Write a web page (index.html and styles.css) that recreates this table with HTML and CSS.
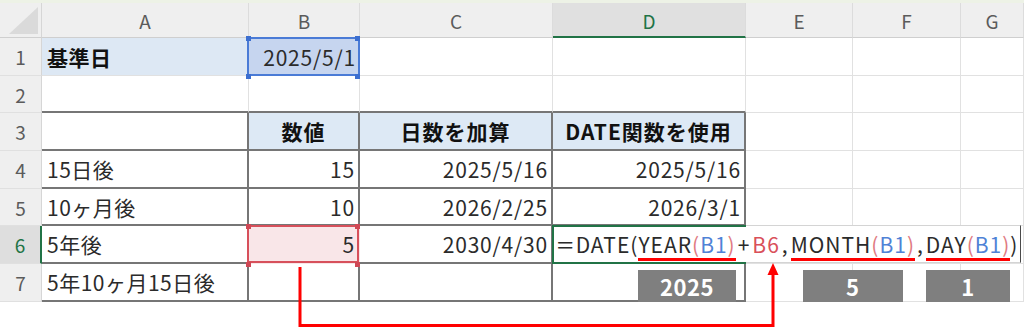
FILE: index.html
```html
<!DOCTYPE html>
<html lang="ja">
<head>
	<meta charset="utf-8">
	<title>DATE関数で日付を加算</title>
	<link rel="stylesheet" href="styles.css">
</head>
<body>
	<div class="sheet">
		<div class="strip"></div>

		<!-- Worksheet grid: row header + columns A..G -->
		<div class="grid">
			<div class="corner"></div>
			<div class="ch">A</div>
			<div class="ch">B</div>
			<div class="ch">C</div>
			<div class="ch active">D</div>
			<div class="ch">E</div>
			<div class="ch">F</div>
			<div class="ch">G</div>

			<!-- row 1 -->
			<div class="rh">1</div>
			<div class="c fill bold">基準日</div>
			<div class="c fill num pick-blue">2025/5/1</div>
			<div class="c"></div>
			<div class="c"></div>
			<div class="c"></div>
			<div class="c"></div>
			<div class="c"></div>

			<!-- row 2 -->
			<div class="rh">2</div>
			<div class="c above"></div>
			<div class="c above"></div>
			<div class="c above"></div>
			<div class="c above"></div>
			<div class="c"></div>
			<div class="c"></div>
			<div class="c"></div>

			<!-- row 3 -->
			<div class="rh">3</div>
			<div class="c tb"></div>
			<div class="c tb head">数値</div>
			<div class="c tb head">日数を加算</div>
			<div class="c tb head">DATE関数を使用</div>
			<div class="c"></div>
			<div class="c"></div>
			<div class="c"></div>

			<!-- row 4 -->
			<div class="rh">4</div>
			<div class="c tb">15日後</div>
			<div class="c tb num">15</div>
			<div class="c tb num">2025/5/16</div>
			<div class="c tb num">2025/5/16</div>
			<div class="c"></div>
			<div class="c"></div>
			<div class="c"></div>

			<!-- row 5 -->
			<div class="rh">5</div>
			<div class="c tb">10ヶ月後</div>
			<div class="c tb num">10</div>
			<div class="c tb num">2026/2/25</div>
			<div class="c tb num">2026/3/1</div>
			<div class="c"></div>
			<div class="c"></div>
			<div class="c"></div>

			<!-- row 6 (D6 is being edited) -->
			<div class="rh active">6</div>
			<div class="c tb">5年後</div>
			<div class="c tb num pick-red">5</div>
			<div class="c tb num">2030/4/30</div>
			<div class="c tb editing">
				<div class="edit"><span class="op eq">=</span>DATE(<span class="arg">YEAR<span class="pr">(</span><span class="ref-b">B1</span><span class="pr">)</span><span class="val">2025</span></span><span class="op">+</span><span class="ref-r">B6</span><span class="op">,</span><span class="arg">MONTH<span class="pr">(</span><span class="ref-b">B1</span><span class="pr">)</span><span class="val inset">5</span></span><span class="op">,</span><span class="arg">DAY<span class="pr">(</span><span class="ref-b">B1</span><span class="pr">)</span><span class="val">1</span></span>)</div>
			</div>
			<div class="c"></div>
			<div class="c"></div>
			<div class="c"></div>

			<!-- row 7 -->
			<div class="rh">7</div>
			<div class="c tb">5年10ヶ月15日後</div>
			<div class="c tb"></div>
			<div class="c tb"></div>
			<div class="c tb"></div>
			<div class="c"></div>
			<div class="c"></div>
			<div class="c"></div>
		</div>

		<!-- arrow from B6 to the +B6 reference -->
		<svg class="arrow" width="1024" height="329" viewBox="0 0 1024 329">
			<polyline points="300,267 300,325.5 773,325.5 773,273" fill="none" stroke="#ff0000" stroke-width="3"/>
			<polygon points="773,263 767.5,275 778.5,275" fill="#ff0000"/>
		</svg>
	</div>
</body>
</html>
```

FILE: styles.css
```css
body {
	margin: 0;
	background: #fff;
	font-family: "Noto Sans CJK JP", sans-serif;
	color: #2b2b2b;
}

.sheet {
	position: relative;
	width: 1024px;
	height: 329px;
	overflow: hidden;
	background: #fff;
}

.strip {
	height: 3px;
	background: #edf2e6;
}

.grid {
	display: grid;
	grid-template-columns: 42px 207px 111px 193px 193px 107px 108px 63px;
	grid-template-rows: 35px 38px 37px 38px 38px 37px 38px 38px;
}

/* headers */
.corner,
.ch,
.rh {
	box-sizing: border-box;
	background: #efefef;
	color: #5b5b5b;
	font-size: 19px;
	display: flex;
	align-items: center;
	justify-content: center;
}

.corner {
	position: relative;
	border-right: 1px solid #d6d6d6;
	border-bottom: 1px solid #cfcfcf;
}

.corner::after {
	content: "";
	position: absolute;
	right: 3px;
	bottom: 3px;
	width: 29px;
	height: 27px;
	background: #dadada;
	clip-path: polygon(100% 0, 100% 100%, 0 100%);
}

.ch {
	border-right: 1px solid #dcdcdc;
	border-bottom: 1px solid #cfcfcf;
	padding-top: 1px;
}

.ch.active {
	background: #e0e0e0;
	color: #217346;
	border-bottom: 2px solid #217346;
}

.rh {
	border-right: 1px solid #d6d6d6;
	border-bottom: 1px solid #e0e0e0;
}

.rh.active {
	background: #dedede;
	color: #217346;
	border-right: 2px solid #217346;
}

/* cells */
.c {
	position: relative;
	box-sizing: border-box;
	border-right: 1px solid #e1e1e1;
	border-bottom: 1px solid #e1e1e1;
	font-size: 21px;
	letter-spacing: 0.5px;
	padding: 0 5px;
	display: flex;
	align-items: center;
	white-space: nowrap;
}

.c.above {
	border-bottom: 2px solid #767676;
}

.c.tb {
	border-right: 2px solid #767676;
	border-bottom: 2px solid #767676;
}

.c.num {
	justify-content: flex-end;
	letter-spacing: 0.8px;
	padding-right: 3px;
}

.c.bold {
	font-weight: 700;
	color: #111;
}

.c.fill {
	background: #dde8f4;
}

.c.head {
	background: #dde9f5;
	font-weight: 700;
	letter-spacing: 1px;
	color: #111;
	justify-content: center;
}

/* selected ranges with corner handles */
.pick-blue,
.pick-red {
	z-index: 1;
}

.pick-blue::before,
.pick-red::before {
	content: "";
	position: absolute;
	left: -2px;
	top: -1px;
	right: -1px;
	bottom: -1px;
	border: 2px solid #4a7bd6;
	z-index: -1;
}

.pick-blue::after,
.pick-red::after {
	content: "";
	position: absolute;
	left: -3px;
	top: -2px;
	width: 5px;
	height: 5px;
	background: #3c6fd0;
	box-shadow: 109px 0 0 #3c6fd0, 0 38px 0 #3c6fd0, 109px 38px 0 #3c6fd0;
}

.c.fill.pick-blue {
	background: #c6d5ef;
}

.c.pick-red {
	background: #f9e6e8;
	border-right-color: transparent;
	border-bottom-color: transparent;
}

.pick-red::before {
	border-color: #d7505b;
}

.pick-red::after {
	background: #cf4855;
	box-shadow: 109px 0 0 #cf4855, 0 38px 0 #cf4855, 109px 38px 0 #cf4855;
}

/* D6 in edit mode: formula spills over E6:G6 */
.editing::before {
	content: "";
	position: absolute;
	left: -1px;
	top: -1px;
	right: -2px;
	bottom: -2px;
	border: 2px solid #217346;
	border-right: none;
	z-index: 3;
}

.edit {
	position: absolute;
	left: 1px;
	top: -1px;
	height: 38px;
	width: 467px;
	box-sizing: border-box;
	padding-left: 1px;
	background: #fff;
	border-top: 1px solid #d4d4d4;
	border-bottom: 1px solid #d4d4d4;
	border-right: 1px solid #4a4a4a;
	z-index: 2;
	display: flex;
	align-items: center;
	font-size: 21px;
	letter-spacing: 1px;
	color: #2b2b2b;
}

.op {
	margin: 0 2px;
}

/* Excel draws a wide equals sign */
.op.eq {
	display: inline-block;
	transform: scaleX(1.4);
	transform-origin: left center;
	margin: 0 6px 0 2px;
}

.arg {
	position: relative;
	display: inline-block;
	line-height: 26px;
}

.arg::after {
	content: "";
	position: absolute;
	left: 0;
	right: 0;
	top: 27px;
	height: 3px;
	background: #ff0000;
}

.pr {
	color: #e07a82;
}

.ref-b {
	color: #4f82d6;
}

.ref-r {
	color: #d9505a;
}

.val {
	position: absolute;
	left: 0;
	right: 0;
	top: 39px;
	height: 32px;
	background: #7f7f7f;
	color: #fff;
	font-weight: 700;
	font-size: 22px;
	letter-spacing: 0.5px;
	line-height: 32px;
	text-align: center;
}

.val.inset {
	left: 12px;
	right: 12px;
}

.arrow {
	position: absolute;
	left: 0;
	top: 0;
	z-index: 5;
	pointer-events: none;
}
```
